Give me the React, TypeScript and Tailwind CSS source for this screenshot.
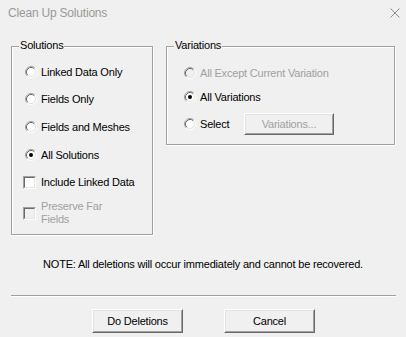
import type { ReactNode } from "react";

// Classic sunken radio, 12px
function Radio({ checked = false, disabled = false }: { checked?: boolean; disabled?: boolean }) {
  return (
    <svg width="12" height="12" viewBox="0 0 12 12" className="shrink-0" aria-hidden>
      <circle cx="6" cy="6" r="5" fill={disabled ? "#f0f0f0" : "#ffffff"} />
      <path d="M2.11 9.89A5.5 5.5 0 0 1 9.89 2.11" stroke="#a0a0a0" fill="none" />
      <path d="M9.89 2.11A5.5 5.5 0 0 1 2.11 9.89" stroke="#ffffff" fill="none" />
      <path d="M2.82 9.18A4.5 4.5 0 0 1 9.18 2.82" stroke="#696969" fill="none" />
      <path d="M9.18 2.82A4.5 4.5 0 0 1 2.82 9.18" stroke="#e3e3e3" fill="none" />
      {checked ? <circle cx="6" cy="6" r="2" fill="#000000" /> : null}
    </svg>
  );
}

function Checkbox({ disabled = false }: { disabled?: boolean }) {
  return (
    <div className="w-[13px] h-[13px] shrink-0 border border-t-[#a0a0a0] border-l-[#a0a0a0] border-b-white border-r-white">
      <div
        className={
          "w-full h-full border border-t-[#696969] border-l-[#696969] border-b-[#e3e3e3] border-r-[#e3e3e3] " +
          (disabled ? "bg-[#f0f0f0]" : "bg-white")
        }
      />
    </div>
  );
}

function Group({ label, className, children }: { label: string; className: string; children: ReactNode }) {
  return (
    <div
      className={
        "relative border border-[#a0a0a0] shadow-[inset_1px_1px_0_#ffffff,1px_1px_0_#ffffff] " + className
      }
    >
      <span className="absolute top-[-8px] left-[7px] px-[1px] bg-[#f0f0f0] leading-[13px]">{label}</span>
      {children}
    </div>
  );
}

function Button({ children, disabled = false, className = "" }: { children: ReactNode; disabled?: boolean; className?: string }) {
  return (
    <button
      type="button"
      className={
        "border border-t-white border-l-white border-b-[#696969] border-r-[#696969] bg-[#f0f0f0] " + className
      }
    >
      <div
        className={
          "w-full h-full flex items-center justify-center border border-t-[#e3e3e3] border-l-[#e3e3e3] border-b-[#a0a0a0] border-r-[#a0a0a0] " +
          (disabled ? "text-[#a0a0a0]" : "text-black")
        }
      >
        {children}
      </div>
    </button>
  );
}

export default function App() {
  return (
    <div className="w-[406px] h-[337px] bg-[#f0f0f0] font-['Liberation_Sans',Arial,sans-serif] text-[11px] leading-[13px] tracking-[-0.2px] text-black flex flex-col overflow-hidden">
      <header className="h-[26px] flex items-center justify-between pl-[8px] pr-[6px]">
        <span className="text-[12px] leading-[16px] text-[#999999]">Clean Up Solutions</span>
        <svg width="10" height="10" viewBox="0 0 10 10" aria-hidden>
          <path d="M0.5 0.5L9.5 9.5M9.5 0.5L0.5 9.5" stroke="#8c8c8c" strokeWidth="1" />
        </svg>
      </header>

      <div className="mt-[20px] flex items-start pl-[11px]">
        <Group label="Solutions" className="w-[142px] h-[189px] pl-[11px] pt-[18px]">
          <div className="flex flex-col">
            <div className="h-[14px] flex items-center gap-[4px] pl-[2px]">
              <Radio />
              <span>Linked Data Only</span>
            </div>
            <div className="mt-[13px] h-[14px] flex items-center gap-[4px] pl-[2px]">
              <Radio />
              <span>Fields Only</span>
            </div>
            <div className="mt-[14px] h-[14px] flex items-center gap-[4px] pl-[2px]">
              <Radio />
              <span>Fields and Meshes</span>
            </div>
            <div className="mt-[14px] h-[14px] flex items-center gap-[4px] pl-[2px]">
              <Radio checked />
              <span>All Solutions</span>
            </div>
            <div className="mt-[13px] h-[14px] flex items-center gap-[5px]">
              <Checkbox />
              <span>Include Linked Data</span>
            </div>
            <div className="mt-[11px] h-[26px] flex items-center gap-[5px]">
              <Checkbox disabled />
              <span className="text-[#a0a0a0]">
                Preserve Far
                <br />
                Fields
              </span>
            </div>
          </div>
        </Group>

        <Group label="Variations" className="ml-[13px] w-[229px] h-[99px] pl-[17px] pt-[19px]">
          <div className="flex flex-col">
            <div className="h-[14px] flex items-center gap-[4px]">
              <Radio disabled />
              <span className="text-[#a0a0a0]">All Except Current Variation</span>
            </div>
            <div className="mt-[10px] h-[14px] flex items-center gap-[4px]">
              <Radio checked />
              <span>All Variations</span>
            </div>
            <div className="mt-[9px] h-[22px] flex items-center gap-[4px]">
              <Radio />
              <span className="w-[40px]">Select</span>
              <Button disabled className="w-[90px] h-[22px]">
                Variations...
              </Button>
            </div>
          </div>
        </Group>
      </div>

      <p className="mt-[23px] text-center">NOTE: All deletions will occur immediately and cannot be recovered.</p>

      <div className="mt-[24px] ml-[11px] mr-[10px] h-px bg-[#a0a0a0] shadow-[0_1px_0_#ffffff]" />

      <div className="mt-[13px] flex pl-[92px] gap-[41px]">
        <Button className="w-[91px] h-[24px]">Do Deletions</Button>
        <Button className="w-[91px] h-[24px]">Cancel</Button>
      </div>
    </div>
  );
}
